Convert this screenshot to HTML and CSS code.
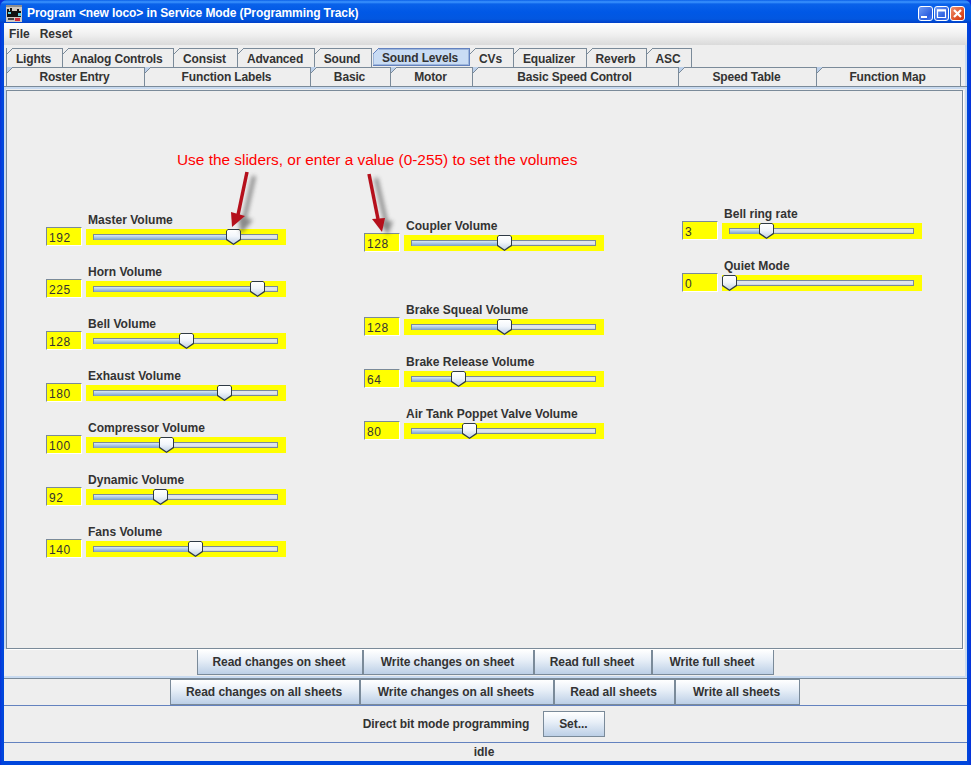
FILE: index.html
```html
<!DOCTYPE html>
<html lang="en">
<head>
<meta charset="utf-8">
<title>Program &lt;new loco&gt; in Service Mode (Programming Track)</title>
<link rel="stylesheet" href="styles.css">
</head>
<body>
<div class="window">
  <header class="titlebar">
    <svg class="appicon" width="16" height="17" viewBox="0 0 16 17">
      <rect width="16" height="17" fill="#cfc9c2"/>
      <rect width="16" height="2" fill="#8d8d8d"/>
      <path d="M1 4h2v2h1V3h2v3h5V4h2v2h2v6H1z" fill="#111"/>
      <rect x="2" y="7" width="3" height="2" fill="#56cfe0"/>
      <rect x="12" y="8" width="3" height="3" fill="#56cfe0"/>
      <rect x="9" y="13" width="5" height="3" fill="#d22c3a"/>
      <rect x="2" y="13" width="6" height="2" fill="#444"/>
    </svg>
    <span class="title">Program &lt;new loco&gt; in Service Mode (Programming Track)</span>
    <div class="winbtns">
      <span class="winbtn min"><svg width="13" height="13" viewBox="0 0 13 13"><rect x="2" y="9" width="6" height="2" fill="#fff"/></svg></span>
      <span class="winbtn max"><svg width="13" height="13" viewBox="0 0 13 13"><path d="M2.5 3h8v7.5h-8z" fill="none" stroke="#fff" stroke-width="1.2"/><rect x="2" y="2.5" width="9" height="2" fill="#fff"/></svg></span>
      <span class="winbtn close"><svg width="13" height="13" viewBox="0 0 13 13"><path d="M3 3l7 7M10 3l-7 7" stroke="#fff" stroke-width="2.2"/></svg></span>
    </div>
  </header>
  <div class="client">
    <nav class="menubar"><span class="menu">File</span><span class="menu">Reset</span></nav>
    <div class="outer">
      <div class="tabs">
        <div class="tabrow row-top">
          <span class="tab">Lights</span><span class="tab">Analog Controls</span><span class="tab">Consist</span><span class="tab">Advanced</span><span class="tab">Sound</span><span class="tab tab-active">Sound Levels</span><span class="tab">CVs</span><span class="tab">Equalizer</span><span class="tab">Reverb</span><span class="tab">ASC</span>
        </div>
        <div class="tabrow row-bottom">
          <span class="tab">Roster Entry</span><span class="tab">Function Labels</span><span class="tab">Basic</span><span class="tab">Motor</span><span class="tab">Basic Speed Control</span><span class="tab">Speed Table</span><span class="tab">Function Map</span>
        </div>
      </div>
      <div class="tabbody">
        <main class="pane">
          <p class="note">Use the sliders, or enter a value (0-255) to set the volumes</p>
          <svg class="arrows" width="420" height="90" viewBox="0 0 420 90">
            <defs><filter id="blur" x="-50%" y="-50%" width="200%" height="200%"><feGaussianBlur stdDeviation="2"/></filter></defs>
            <g fill="#444" stroke="#444" opacity=".6" filter="url(#blur)">
              <path d="M54 6L44 50" stroke-width="4" fill="none"/><path d="M38 46l15 4-12 14z" stroke="none"/>
              <path d="M176 8L186 52" stroke-width="4" fill="none"/><path d="M179 52l14-1-5 14z" stroke="none"/>
            </g>
            <g fill="#b5101c" stroke="#b5101c">
              <path d="M47 2L38 45" stroke-width="3.5" fill="none"/><path d="M31 42l14 4-13 11z" stroke="none"/>
              <path d="M169 4L178 49" stroke-width="3.5" fill="none"/><path d="M172 49l13-1-3 14z" stroke="none"/>
            </g>
          </svg>
          <div class="cols">
            <section class="col col-a">
              <div class="item"><label class="lbl">Master Volume</label><div class="ctl"><input class="num" value="192"><div class="slider"><div class="track"><div class="fill" style="width:140px"></div><span class="thumb" style="left:140px"></span></div></div></div></div>
              <div class="item"><label class="lbl">Horn Volume</label><div class="ctl"><input class="num" value="225"><div class="slider"><div class="track"><div class="fill" style="width:164px"></div><span class="thumb" style="left:164px"></span></div></div></div></div>
              <div class="item"><label class="lbl">Bell Volume</label><div class="ctl"><input class="num" value="128"><div class="slider"><div class="track"><div class="fill" style="width:93px"></div><span class="thumb" style="left:93px"></span></div></div></div></div>
              <div class="item"><label class="lbl">Exhaust Volume</label><div class="ctl"><input class="num" value="180"><div class="slider"><div class="track"><div class="fill" style="width:131px"></div><span class="thumb" style="left:131px"></span></div></div></div></div>
              <div class="item"><label class="lbl">Compressor Volume</label><div class="ctl"><input class="num" value="100"><div class="slider"><div class="track"><div class="fill" style="width:73px"></div><span class="thumb" style="left:73px"></span></div></div></div></div>
              <div class="item"><label class="lbl">Dynamic Volume</label><div class="ctl"><input class="num" value="92"><div class="slider"><div class="track"><div class="fill" style="width:67px"></div><span class="thumb" style="left:67px"></span></div></div></div></div>
              <div class="item"><label class="lbl">Fans Volume</label><div class="ctl"><input class="num" value="140"><div class="slider"><div class="track"><div class="fill" style="width:102px"></div><span class="thumb" style="left:102px"></span></div></div></div></div>
            </section>
            <section class="col col-b">
              <div class="item item-gap"><label class="lbl">Coupler Volume</label><div class="ctl"><input class="num" value="128"><div class="slider"><div class="track"><div class="fill" style="width:93px"></div><span class="thumb" style="left:93px"></span></div></div></div></div>
              <div class="item"><label class="lbl">Brake Squeal Volume</label><div class="ctl"><input class="num" value="128"><div class="slider"><div class="track"><div class="fill" style="width:93px"></div><span class="thumb" style="left:93px"></span></div></div></div></div>
              <div class="item"><label class="lbl">Brake Release Volume</label><div class="ctl"><input class="num" value="64"><div class="slider"><div class="track"><div class="fill" style="width:47px"></div><span class="thumb" style="left:47px"></span></div></div></div></div>
              <div class="item"><label class="lbl">Air Tank Poppet Valve Volume</label><div class="ctl"><input class="num" value="80"><div class="slider"><div class="track"><div class="fill" style="width:58px"></div><span class="thumb" style="left:58px"></span></div></div></div></div>
            </section>
            <section class="col col-c">
              <div class="item"><label class="lbl">Bell ring rate</label><div class="ctl"><input class="num" value="3"><div class="slider"><div class="track"><div class="fill" style="width:37px"></div><span class="thumb" style="left:37px"></span></div></div></div></div>
              <div class="item"><label class="lbl">Quiet Mode</label><div class="ctl"><input class="num" value="0"><div class="slider"><div class="track"><div class="fill" style="width:0"></div><span class="thumb" style="left:0"></span></div></div></div></div>
            </section>
          </div>
        </main>
      </div>
      <div class="btnrow btnrow-sheet">
        <button class="btn">Read changes on sheet</button><button class="btn">Write changes on sheet</button><button class="btn">Read full sheet</button><button class="btn">Write full sheet</button>
      </div>
    </div>
    <div class="btnrow btnrow-all">
      <button class="btn">Read changes on all sheets</button><button class="btn">Write changes on all sheets</button><button class="btn">Read all sheets</button><button class="btn">Write all sheets</button>
    </div>
    <div class="direct"><span>Direct bit mode programming</span><button class="btn btn-set">Set...</button></div>
    <footer class="status">idle</footer>
  </div>
</div>
</body>
</html>
```

FILE: styles.css
```css
* { box-sizing: border-box; }
html, body { margin: 0; padding: 0; }
body { font-family: "Liberation Sans", Arial, sans-serif; background: #0831d9; }
.window {
  width: 971px; height: 765px; display: flex; flex-direction: column;
  border-radius: 7px 7px 0 0; overflow: hidden;
  background: linear-gradient(90deg, #0831d9 0, #0046dc 2px, #0046dc 968px, #0831d9 100%);
}
.titlebar {
  height: 23px; flex: none; display: flex; align-items: center; padding: 3px 6px 0 6px;
  background: linear-gradient(180deg, #0a5fe8 0, #3d95ff 2px, #0a62ea 4px, #0058e6 12px, #0257e0 19px, #0040c8 23px);
}
.appicon { flex: none; margin-top: 1px; }
.title { color: #fff; font-weight: 700; font-size: 12px; letter-spacing: -.1px; margin-left: 5px; white-space: nowrap; }
.winbtns { margin-left: auto; display: flex; gap: 1px; }
.winbtn { width: 15px; height: 15px; border: 1px solid #fff; border-radius: 3px; display: flex; align-items: center; justify-content: center; overflow: hidden; }
.min, .max { background: linear-gradient(135deg, #6f9bf5, #2c5fe0 70%, #4a7cf0); }
.close { background: linear-gradient(135deg, #ee9070, #dc4a20 70%, #c8341a); }
.client {
  flex: 1; margin: 0 4px 4px 4px; background: #eeeeee; display: flex; flex-direction: column; min-height: 0;
}
.menubar {
  height: 22px; flex: none; display: flex; align-items: center; gap: 10px; padding: 0 5px; font-size: 12px; font-weight: 700; color: #333;
  background: linear-gradient(180deg, #ffffff 0, #efefef 55%, #dadada 100%);
}
.outer {
  height: 634px; flex: none; display: flex; flex-direction: column;
  border-bottom: 1px solid #7a8a99;
  box-shadow: inset 0 -2px 0 #c8daf0, inset -2px 0 0 #c8daf0;
  background: #eee;
}
.tabs { height: 41px; flex: none; padding: 3px 0 0 2px; }
.tabrow { display: grid; height: 19px; font-size: 12px; font-weight: 700; color: #333; letter-spacing: -.15px; }
.row-top { grid-template-columns: 57px 111px 64px 77px 57px 98px 44px 73px 60px 45px; }
.row-bottom { grid-template-columns: 139px 166px 80px 82px 206px 138px 144px; }
.tab {
  position: relative; display: flex; align-items: center; justify-content: center; white-space: nowrap; padding: 1px 2px 0 0;
  border: 1px solid #7a8a99; border-bottom: 0; background: #eee;
}
.row-bottom .tab { padding-top: 0; }
.tab + .tab { border-left: 0; }
.tab::before {
  content: ""; position: absolute; left: 0; top: -1px; width: 6px; height: 6px;
  background: linear-gradient(135deg, #eee 0 42%, #7a8a99 42% 58%, #eee 58%);
}
.row-bottom .tab::before { background: linear-gradient(135deg, #bcd0ea 0 42%, #7a8a99 42% 58%, #eee 58%); }
.tab-active {
  border: 1px solid #6382bf; box-shadow: inset 0 0 0 1px #9db6dc; margin-left: 1px; background: #c9dcf4; height: 18px;
}
.tab-active::before { left: 0; background: linear-gradient(135deg, #eee 0 42%, #6382bf 42% 58%, #c9dcf4 58%); }
.tabbody {
  flex: none; height: 563px; padding: 3px 0 0 2px;
  border-top: 1px solid #7a8a99; box-shadow: inset 0 2px 0 #c8daf0, inset 2px 0 0 #c8daf0, inset -2px 0 0 #c8daf0;
}
.pane {
  position: relative; height: 559px; width: 957px;
  border: 1px solid #7a8a99; box-shadow: 1px 1px 0 #fff; background: #eee; font-size: 12px;
}
.note { position: absolute; left: 170px; top: 60px; margin: 0; color: #f00; font-size: 15.4px; line-height: 18px; white-space: nowrap; }
.arrows { position: absolute; left: 193px; top: 79px; pointer-events: none; z-index: 2; }
.cols { display: grid; grid-template-columns: 318px 318px 280px; padding-left: 39px; }
.col { display: flex; flex-direction: column; }
.col-a { padding-top: 122px; }
.col-b { padding-top: 128px; }
.col-c { padding-top: 116px; }
.item { height: 33px; margin-bottom: 19px; }
.item-gap { margin-bottom: 51px; }
.lbl { display: block; height: 14px; line-height: 14px; margin-left: 42px; font-weight: 700; font-size: 12.05px; color: #333; white-space: nowrap; }
.ctl { display: flex; gap: 4px; height: 19px; }
.num {
  width: 36px; height: 19px; padding: 2px 0 0 2px; margin: 0; font: 12px "Liberation Sans", sans-serif; color: #333; letter-spacing: .6px;
  background: #ff0; border: 1px solid #7a8a99; border-right-color: #fff; border-bottom-color: #fff; outline: none; border-radius: 0;
}
.slider { width: 200px; height: 16px; margin-top: 2px; background: #ff0; padding: 5px 8px 0 7px; }
.track { position: relative; height: 6px; background: linear-gradient(180deg, #dfe5ec 0, #dfe5ec 60%, #b3c0ce 100%); box-shadow: inset 0 0 0 1px #7a8a99; }
.fill { height: 100%; background: linear-gradient(180deg, #7a8a99 0 1px, #d8e8f8 1px, #a6c4e4 60%, #7a9cc4 100%); box-shadow: inset 1px 0 0 #7a8a99; }
.thumb {
  position: absolute; top: -5px; width: 15px; height: 16px; margin-left: -7px;
  clip-path: polygon(2px 0, 13px 0, 100% 2px, 100% 68%, 50% 100%, 0 68%, 0 2px);
  background: #2f3a45;
}
.thumb::before {
  content: ""; position: absolute; inset: 1px 1px 1.5px 1px;
  clip-path: polygon(1px 0, 12px 0, 100% 1px, 100% 66%, 50% 100%, 0 66%, 0 1px);
  background: linear-gradient(180deg, #fff 0, #f2f6fb 45%, #bfd0e4 100%);
}
.btnrow { display: grid; justify-content: center; flex: none; }
.btnrow-sheet { height: 26px; grid-template-columns: 166px 171px 118px 122px; }
.btnrow-all { height: 27px; padding-right: 1px; border-bottom: 1px solid #6382bf; grid-template-columns: 190px 194px 121px 125px; }
.btn {
  margin: 0; height: 26px; padding: 0 2px 0 0; font: 700 12px "Liberation Sans", sans-serif; letter-spacing: -.05px; color: #333; white-space: nowrap;
  border: 1px solid #7a8a99; border-radius: 0;
  background: linear-gradient(180deg, #fff 0, #e9f0f8 40%, #bccfe6 100%);
}
.direct { height: 37px; flex: none; display: flex; align-items: center; justify-content: center; gap: 14px; padding-right: 3px; border-bottom: 1px solid #6382bf; font-size: 12px; font-weight: 700; letter-spacing: -.05px; color: #333; }
.btn-set { width: 62px; }
.status { flex: 1; display: flex; align-items: center; justify-content: center; font-size: 12px; font-weight: 700; color: #333; padding-right: 3px; }
```
